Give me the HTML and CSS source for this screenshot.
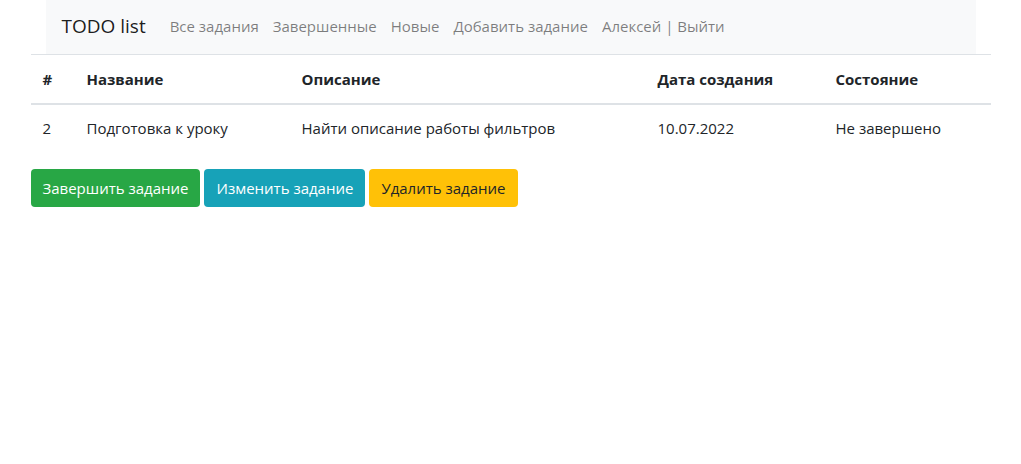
FILE: index.html
```html
<!DOCTYPE html>
<html lang="ru">
<head>
<meta charset="utf-8">
<title>TODO list</title>
<link rel="stylesheet" href="styles.css">
</head>
<body>
<div class="container">
  <nav class="navbar">
    <a class="brand" href="#">TODO list</a>
    <ul class="nav">
      <li><a href="#">Все задания</a></li>
      <li><a href="#">Завершенные</a></li>
      <li><a href="#">Новые</a></li>
      <li><a href="#">Добавить задание</a></li>
      <li><a href="#">Алексей | Выйти</a></li>
    </ul>
  </nav>
  <table class="table">
    <thead>
      <tr>
        <th class="c1">#</th>
        <th class="c2">Название</th>
        <th class="c3">Описание</th>
        <th class="c4">Дата создания</th>
        <th class="c5">Состояние</th>
      </tr>
    </thead>
    <tbody>
      <tr>
        <td>2</td>
        <td>Подготовка к уроку</td>
        <td>Найти описание работы фильтров</td>
        <td>10.07.2022</td>
        <td>Не завершено</td>
      </tr>
    </tbody>
  </table>
  <div class="actions">
    <a class="btn btn-success" href="#">Завершить задание</a>
    <a class="btn btn-info" href="#">Изменить задание</a>
    <a class="btn btn-warning" href="#">Удалить задание</a>
  </div>
</div>
</body>
</html>
```
FILE: styles.css
```css
* { box-sizing: border-box; }
body {
  margin: 0;
  font-family: "Open Sans", "Noto Sans", sans-serif;
  font-size: 15px;
  line-height: 24px;
  color: #212529;
  background: #fff;
}
.container {
  width: 960px;
  margin: 0 auto;
}
.navbar {
  margin: 0 15px;
  height: 54px;
  background: #f8f9fa;
  display: flex;
  align-items: center;
  padding: 0 16px 2px;
}
.brand {
  font-size: 19px;
  color: rgba(0,0,0,.9);
  text-decoration: none;
  margin-right: 17px;
  line-height: 30px;
}
.nav {
  list-style: none;
  margin: 0;
  padding: 0;
  display: flex;
}
.nav a {
  display: block;
  padding: 0 7px;
  color: rgba(0,0,0,.5);
  text-decoration: none;
}
.table {
  width: 100%;
  border-collapse: collapse;
  margin-bottom: 16px;
}
.table th, .table td {
  padding: 12px;
  text-align: left;
  vertical-align: top;
  border-top: 1px solid #dee2e6;
}
.table td { padding: 11px 12px 13px; }
.table th { font-weight: 700; }
.table thead th {
  border-bottom: 2px solid #dee2e6;
}
.c1 { width: 44px; }
.c2 { width: 215px; }
.c3 { width: 356px; }
.c4 { width: 178px; }
.actions {
  display: flex;
  gap: 4px;
}
.btn {
  display: inline-block;
  padding: 6px 11px;
  border: 1px solid transparent;
  border-radius: 4px;
  text-decoration: none;
  line-height: 24px;
}
.btn-success { background: #28a745; color: #fff; }
.btn-info { background: #17a2b8; color: #fff; }
.btn-warning { background: #ffc107; color: #212529; }
```
